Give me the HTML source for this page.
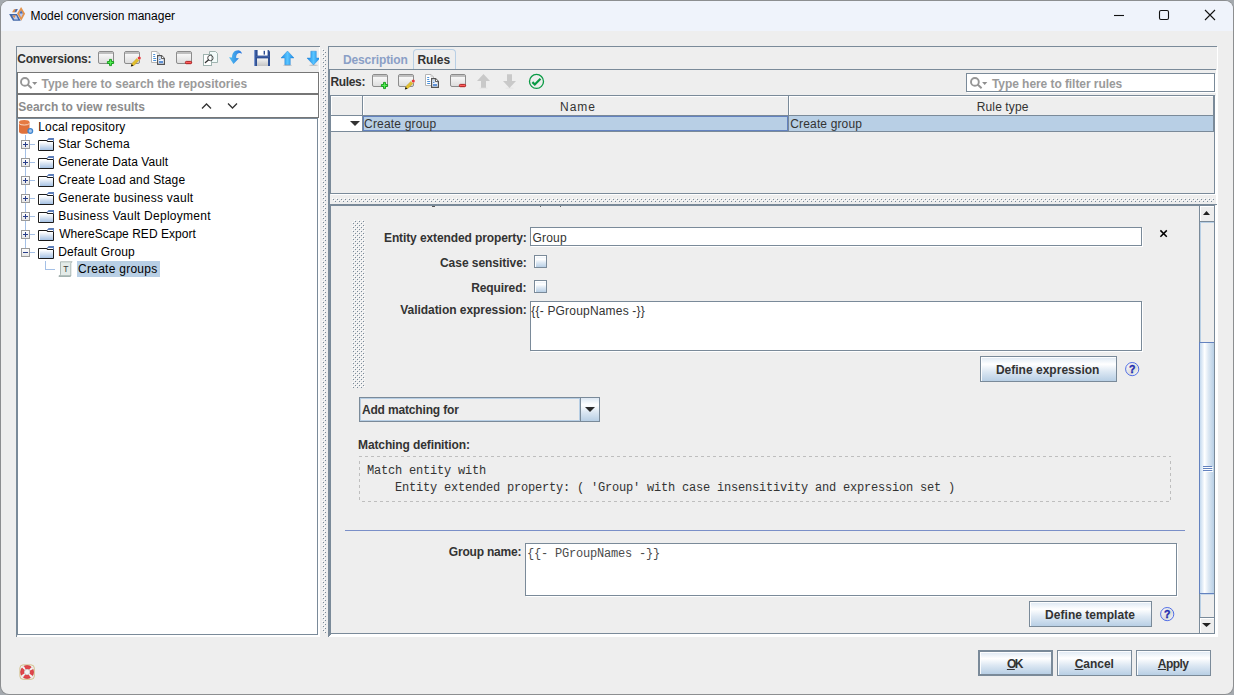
<!DOCTYPE html>
<html><head><meta charset="utf-8"><title>Model conversion manager</title>
<style>
*{box-sizing:border-box;margin:0;padding:0}
html,body{width:1234px;height:695px;overflow:hidden;background:#a4a9ae;}
body{font-family:"Liberation Sans",sans-serif;font-size:12px;color:#333;position:relative}
.a{position:absolute}
#win{position:absolute;left:1px;top:1px;width:1232px;height:693px;background:#eeeeee;border-radius:8px;overflow:hidden;box-shadow:0 0 0 1px rgba(120,120,120,0.55)}
#title{position:absolute;left:0;top:0;width:100%;height:30px;background:#eff3fb}
#title .t{position:absolute;left:31px;top:7px;font-size:12px;color:#000;white-space:nowrap;line-height:14px}
.l{position:absolute;white-space:nowrap;font-weight:bold;color:#333;line-height:14px;height:14px}
.p{position:absolute;white-space:nowrap;color:#333;line-height:14px;height:14px}
.btn{position:absolute;border:1px solid #7a8a99;box-shadow:inset 1px 1px 0 rgba(255,255,255,0.9);background:linear-gradient(#dde8f3 0%,#ffffff 30%,#dde8f3 60%,#b8cfe5 100%);text-align:center;font-weight:bold;color:#333;white-space:nowrap;line-height:14px}
.mono{font-family:"Liberation Mono",monospace;font-size:12px;letter-spacing:-0.2px;color:#333;white-space:pre;position:absolute;line-height:14px;height:14px}
svg{position:absolute;overflow:visible}
</style></head><body>
<div id="win"><div id="title"></div></div>
<div class="p" style="left:30.40px;top:9px;letter-spacing:-0.004px;color:#000">Model conversion manager</div>
<svg style="left:1100px;top:0" width="134" height="31" viewBox="1100 0 134 31"><g stroke="#111" stroke-width="1.1" fill="none"><path d="M1114 15.5H1124"/><rect x="1159.5" y="10.5" width="9" height="9" rx="1.5"/><path d="M1205 10L1215 20M1215 10L1205 20"/></g></svg>
<svg style="left:0;top:0" width="30" height="30" viewBox="0 0 30 30"><path d="M9.1 14H17L20.8 20.8H13Z" fill="#4468a8"/><path d="M12.2 15.6H16.2L18.2 19.4H14.2Z" fill="#c2d0f0"/><path d="M12.4 15.6H15.8L14.2 18.2Z" fill="#e08a45"/><path d="M21.1 7L25.1 13.8L21.2 20.8L17.1 13.5Z" fill="#e2924c"/><path d="M21.1 10.4L23 13.8L21.2 17.4L19.2 13.6Z" fill="#b9c8ef"/><path d="M21.1 10.4L22.8 13.6H19.4Z" fill="#4a6cae"/><path d="M15.4 9H17.9L16.2 12.2H13.6Z" fill="#4a6cae"/><path d="M14 9.2L15.6 9L14.4 12.2H12Z" fill="#e08a45"/></svg>
<div class="a" style="left:16px;top:46px;width:304px;height:1px;background:#7a8a99;"></div>
<div class="a" style="left:16px;top:46px;width:1px;height:591px;background:#7a8a99;"></div>
<div class="l" style="left:17.20px;top:52px;letter-spacing:-0.218px;">Conversions:</div>
<svg style="left:98px;top:51px" width="16" height="16" viewBox="0 0 16 16"><defs><linearGradient id="g1" x1="0" y1="0" x2="0" y2="1"><stop offset="0" stop-color="#fff"/><stop offset="1" stop-color="#dcdcdc"/></linearGradient></defs><rect x="0.5" y="0.5" width="15" height="12" rx="1.5" fill="url(#g1)" stroke="#8c8c8c"/><rect x="1" y="1" width="14" height="2" fill="#b4b4b4"/><rect x="1" y="1.6" width="14" height="0.8" fill="#d0d0d0"/><path d="M11.5 8.4H13.5V10.5H15.6V12.5H13.5V14.6H11.5V12.5H9.4V10.5H11.5Z" fill="#30d830" stroke="#169a1c" stroke-width="0.9" stroke-linejoin="round"/><path d="M12.5 9.2V13.8M10.2 11.5H14.8" stroke="#5cf05c" stroke-width="0.8" fill="none"/></svg>
<svg style="left:124px;top:51px" width="17" height="16" viewBox="0 0 17 16"><defs><linearGradient id="g2" x1="0" y1="0" x2="0" y2="1"><stop offset="0" stop-color="#fff"/><stop offset="1" stop-color="#dcdcdc"/></linearGradient></defs><rect x="0.5" y="0.5" width="15" height="12" rx="1.5" fill="url(#g2)" stroke="#8c8c8c"/><rect x="1" y="1" width="14" height="2" fill="#b4b4b4"/><rect x="1" y="1.6" width="14" height="0.8" fill="#d0d0d0"/><path d="M7.4 15L8 12.4L13.6 6.8L15.6 8.8L10 14.4Z" fill="#ecc932" stroke="#b08f1c" stroke-width="0.5"/><path d="M9 12.6L14 7.6M10 13.4L15 8.4" stroke="#c9a51e" stroke-width="0.5"/><path d="M13 7.4L13.8 6.6L15.8 8.6L15 9.4Z" fill="#e4e4e4"/><circle cx="15.3" cy="7" r="1.5" fill="#e8363a"/><path d="M6.8 15.4L7.7 13L9.4 14.7Z" fill="#111"/></svg>
<svg style="left:148px;top:51px" width="17" height="16" viewBox="0 0 17 16"><path d="M3.5 0.5H9L11.5 3V11.5H3.5Z" fill="#fff" stroke="#b4b4b4"/><path d="M9 0.5V3H11.5" fill="none" stroke="#c4c4c4" stroke-width="0.8"/><path d="M5.2 3.5H7.2M5.2 5.5H7.2M5.2 7.5H8.2M5.2 9.5H8.2" stroke="#4a90d9" stroke-width="1"/><path d="M9.6 4.6H13.6L16.4 7.4V13.4H9.6Z" fill="#f2f7ff" stroke="#555" stroke-width="1.2"/><path d="M13.4 4.8V7.6H16.2" fill="#fff" stroke="#555" stroke-width="1"/><rect x="11" y="10" width="4" height="2.2" fill="#5f92d6"/><rect x="11.2" y="7.8" width="1.2" height="1.2" fill="#3a78cc"/><rect x="11.4" y="6.2" width="0.8" height="1" fill="#7fb0e8"/></svg>
<svg style="left:176px;top:51px" width="16" height="16" viewBox="0 0 16 16"><defs><linearGradient id="g3" x1="0" y1="0" x2="0" y2="1"><stop offset="0" stop-color="#fff"/><stop offset="1" stop-color="#dcdcdc"/></linearGradient></defs><rect x="0.5" y="0.5" width="15" height="12" rx="1.5" fill="url(#g3)" stroke="#8c8c8c"/><rect x="1" y="1" width="14" height="2" fill="#b4b4b4"/><rect x="1" y="1.6" width="14" height="0.8" fill="#d0d0d0"/><rect x="9.4" y="10.4" width="6.2" height="2.3" rx="0.9" fill="#ff5e5e" stroke="#a81414" stroke-width="0.9"/></svg>
<svg style="left:203px;top:51px" width="16" height="16" viewBox="0 0 16 16"><path d="M6.5 0.5H12.5L14.5 2.5V11.5H6.5Z" fill="#f2fbfa" stroke="#9fb3af"/><rect x="0.5" y="3.5" width="8" height="11" fill="#fff" stroke="#9fb3af"/><circle cx="7.4" cy="7" r="2.7" fill="#ffffff" fill-opacity="0.35" stroke="#3a3a3a" stroke-width="0.9"/><path d="M5.4 9L2.4 11.5" stroke="#333" stroke-width="1.3" stroke-linecap="round"/></svg>
<svg style="left:229px;top:50px" width="14" height="15" viewBox="0 0 14 15"><defs><linearGradient id="g4" x1="0" y1="0" x2="1" y2="0"><stop offset="0" stop-color="#4fc0f2"/><stop offset="1" stop-color="#2a74de"/></linearGradient></defs><path d="M4.5 14L0 7.2L3 7.6C3 3 5.5 0.2 9.5 0.3C11.5 0.5 12.6 2 13 3.8C11.6 2.6 9.6 2.6 8.2 4C7.2 5.2 7 6.6 7.2 8L10 8.3Z" fill="url(#g4)"/></svg>
<svg style="left:254px;top:50px" width="16" height="16" viewBox="0 0 16 16"><defs><linearGradient id="g5" x1="0" y1="0" x2="0" y2="1"><stop offset="0" stop-color="#f4f4f4"/><stop offset="1" stop-color="#c4c4c4"/></linearGradient></defs><path d="M0 0H14.5L16 1.5V16H0Z" fill="#2e4f93"/><rect x="0" y="0" width="1.2" height="16" fill="#7d98cf"/><rect x="3.6" y="0" width="10" height="5.6" fill="#fff"/><rect x="9.6" y="0.8" width="1.4" height="3.8" fill="#2e4f93"/><rect x="3" y="8.4" width="11" height="7.6" fill="url(#g5)"/><rect x="2" y="6" width="13" height="1.2" fill="#4060a6"/></svg>
<svg style="left:281px;top:51px" width="13" height="15" viewBox="0 0 13 15"><defs><linearGradient id="g6" x1="0" y1="0" x2="1" y2="0"><stop offset="0" stop-color="#1688e6"/><stop offset="0.5" stop-color="#58c4ff"/><stop offset="1" stop-color="#1688e6"/></linearGradient></defs><ellipse cx="6.5" cy="14.2" rx="4.5" ry="0.7" fill="#000" fill-opacity="0.18"/><path d="M6.5 0L13 7H9.3V13.8H3.8V7H0Z" fill="url(#g6)" stroke="#1878d0" stroke-width="0.4"/></svg>
<svg style="left:307px;top:51px" width="13" height="15" viewBox="0 0 13 15"><defs><linearGradient id="g7" x1="0" y1="0" x2="1" y2="0"><stop offset="0" stop-color="#1688e6"/><stop offset="0.5" stop-color="#58c4ff"/><stop offset="1" stop-color="#1688e6"/></linearGradient></defs><ellipse cx="6.5" cy="14.2" rx="4.5" ry="0.7" fill="#000" fill-opacity="0.18"/><path d="M6.5 14L13 7H9.3V0.2H3.8V7H0Z" fill="url(#g7)" stroke="#1878d0" stroke-width="0.4"/></svg>
<div class="a" style="left:17px;top:636px;width:303px;height:1px;background:#fff;"></div>
<div class="a" style="left:319px;top:47px;width:1px;height:590px;background:#fff;"></div>
<div class="a" style="left:320px;top:47px;width:8px;height:20px;background:#eee;"></div>
<div class="a" style="left:17px;top:72px;width:302px;height:22px;background:#fff;"></div>
<div class="a" style="left:17px;top:72px;width:302px;height:1px;background:#767676;"></div>
<div class="a" style="left:17px;top:72px;width:1px;height:22px;background:#767676;"></div>
<div class="a" style="left:17px;top:93px;width:302px;height:1px;background:#767676;"></div>
<div class="a" style="left:318px;top:72px;width:1px;height:22px;background:#767676;"></div>
<svg style="left:20px;top:77px" width="18" height="12" viewBox="0 0 18 12"><circle cx="4.9" cy="4.9" r="3.9" fill="none" stroke="#969696" stroke-width="1.9"/><path d="M7.6 7.6L11.6 11.2" stroke="#949494" stroke-width="2"/><path d="M12.1 4.9H17.3L14.7 8.1Z" fill="#8e8e8e"/></svg>
<div class="l" style="left:41.50px;top:77px;letter-spacing:-0.006px;color:#9a9a9a">Type here to search the repositories</div>
<div class="a" style="left:17px;top:94px;width:302px;height:24px;background:#fff;"></div>
<div class="a" style="left:17px;top:94px;width:302px;height:1px;background:#767676;"></div>
<div class="a" style="left:17px;top:94px;width:1px;height:24px;background:#767676;"></div>
<div class="a" style="left:17px;top:117px;width:302px;height:1px;background:#767676;"></div>
<div class="a" style="left:318px;top:94px;width:1px;height:24px;background:#767676;"></div>
<div class="l" style="left:18.20px;top:100px;letter-spacing:0.005px;color:#8c8c8c">Search to view results</div>
<svg style="left:201px;top:102px" width="40" height="8" viewBox="0 0 40 8"><path d="M1 6.5L5.5 2L10 6.5M27 1.5L31.5 6L36 1.5" fill="none" stroke="#333" stroke-width="1.3"/></svg>
<div class="a" style="left:18px;top:118px;width:300px;height:517px;background:#fff;"></div>
<div class="a" style="left:17px;top:118px;width:1px;height:517px;background:#7a8a99;"></div>
<div class="a" style="left:17px;top:118px;width:301px;height:1px;background:#7a8a99;"></div>
<div class="a" style="left:17px;top:634px;width:301px;height:1px;background:#7a8a99;"></div>
<div class="a" style="left:317px;top:118px;width:1px;height:517px;background:#7a8a99;"></div>
<div class="a" style="left:18px;top:635px;width:301px;height:1px;background:#fff;"></div>
<div class="a" style="left:318px;top:118px;width:1px;height:518px;background:#fff;"></div>
<div class="a" style="left:25px;top:135px;width:1px;height:118px;background:#a4c0e6;"></div>
<svg style="left:19px;top:120px" width="15" height="15" viewBox="0 0 15 15"><path d="M0 2.5V11.5A5.25 2.3 0 0 0 10.5 11.5V2.5Z" fill="#e0713a"/><ellipse cx="5.25" cy="2.4" rx="5.25" ry="2.3" fill="#e57a42"/><path d="M0.2 3.6A5.25 2 0 0 0 10.3 3.6" fill="none" stroke="#fde8d8" stroke-width="0.9"/><circle cx="11.3" cy="11" r="2.3" fill="#a9c8ee" stroke="#3f86cf" stroke-width="1.3"/></svg>
<div class="p" style="left:38.30px;top:120px;letter-spacing:0.153px;color:#000">Local repository</div>
<div class="a" style="left:30px;top:144px;width:5px;height:1px;background:#a4c0e6;"></div>
<svg style="left:21px;top:140px" width="9" height="9" viewBox="0 0 9 9"><defs><linearGradient id="g8" x1="0" y1="0" x2="0" y2="1"><stop offset="0" stop-color="#fff"/><stop offset="1" stop-color="#e4e4e4"/></linearGradient></defs><rect x="0.5" y="0.5" width="8" height="8" fill="url(#g8)" stroke="#9a9a9a"/><path d="M2 4.5H7" stroke="#2a3f8a" stroke-width="1"/><path d="M4.5 2V7" stroke="#2a3f8a" stroke-width="1"/></svg>
<svg style="left:38px;top:138px" width="16" height="13" viewBox="0 0 16 13"><defs><linearGradient id="g9" x1="0" y1="0" x2="0" y2="1"><stop offset="0" stop-color="#fff"/><stop offset="1" stop-color="#a6c2e4"/></linearGradient></defs><path d="M9 2L10.6 0H16V2Z" fill="#5b7dba"/><path d="M0.5 2.5H9L10.5 1.5H15.5V12.5H0.5Z" fill="#fff"/><rect x="2" y="4" width="13" height="8" fill="url(#g9)"/><path d="M0.5 2.5H9.2V3.5H15.5V12.5H0.5Z" fill="none" stroke="#1c1c1c" stroke-width="1"/><path d="M9.2 2.6L10 1.5H15.5V3.5" fill="none" stroke="#5b7dba" stroke-width="1"/></svg>
<div class="p" style="left:58.20px;top:137px;letter-spacing:0.210px;color:#000">Star Schema</div>
<div class="a" style="left:30px;top:162px;width:5px;height:1px;background:#a4c0e6;"></div>
<svg style="left:21px;top:158px" width="9" height="9" viewBox="0 0 9 9"><defs><linearGradient id="g10" x1="0" y1="0" x2="0" y2="1"><stop offset="0" stop-color="#fff"/><stop offset="1" stop-color="#e4e4e4"/></linearGradient></defs><rect x="0.5" y="0.5" width="8" height="8" fill="url(#g10)" stroke="#9a9a9a"/><path d="M2 4.5H7" stroke="#2a3f8a" stroke-width="1"/><path d="M4.5 2V7" stroke="#2a3f8a" stroke-width="1"/></svg>
<svg style="left:38px;top:156px" width="16" height="13" viewBox="0 0 16 13"><defs><linearGradient id="g11" x1="0" y1="0" x2="0" y2="1"><stop offset="0" stop-color="#fff"/><stop offset="1" stop-color="#a6c2e4"/></linearGradient></defs><path d="M9 2L10.6 0H16V2Z" fill="#5b7dba"/><path d="M0.5 2.5H9L10.5 1.5H15.5V12.5H0.5Z" fill="#fff"/><rect x="2" y="4" width="13" height="8" fill="url(#g11)"/><path d="M0.5 2.5H9.2V3.5H15.5V12.5H0.5Z" fill="none" stroke="#1c1c1c" stroke-width="1"/><path d="M9.2 2.6L10 1.5H15.5V3.5" fill="none" stroke="#5b7dba" stroke-width="1"/></svg>
<div class="p" style="left:58.20px;top:155px;letter-spacing:0.078px;color:#000">Generate Data Vault</div>
<div class="a" style="left:30px;top:180px;width:5px;height:1px;background:#a4c0e6;"></div>
<svg style="left:21px;top:176px" width="9" height="9" viewBox="0 0 9 9"><defs><linearGradient id="g12" x1="0" y1="0" x2="0" y2="1"><stop offset="0" stop-color="#fff"/><stop offset="1" stop-color="#e4e4e4"/></linearGradient></defs><rect x="0.5" y="0.5" width="8" height="8" fill="url(#g12)" stroke="#9a9a9a"/><path d="M2 4.5H7" stroke="#2a3f8a" stroke-width="1"/><path d="M4.5 2V7" stroke="#2a3f8a" stroke-width="1"/></svg>
<svg style="left:38px;top:174px" width="16" height="13" viewBox="0 0 16 13"><defs><linearGradient id="g13" x1="0" y1="0" x2="0" y2="1"><stop offset="0" stop-color="#fff"/><stop offset="1" stop-color="#a6c2e4"/></linearGradient></defs><path d="M9 2L10.6 0H16V2Z" fill="#5b7dba"/><path d="M0.5 2.5H9L10.5 1.5H15.5V12.5H0.5Z" fill="#fff"/><rect x="2" y="4" width="13" height="8" fill="url(#g13)"/><path d="M0.5 2.5H9.2V3.5H15.5V12.5H0.5Z" fill="none" stroke="#1c1c1c" stroke-width="1"/><path d="M9.2 2.6L10 1.5H15.5V3.5" fill="none" stroke="#5b7dba" stroke-width="1"/></svg>
<div class="p" style="left:58.20px;top:173px;letter-spacing:0.140px;color:#000">Create Load and Stage</div>
<div class="a" style="left:30px;top:198px;width:5px;height:1px;background:#a4c0e6;"></div>
<svg style="left:21px;top:194px" width="9" height="9" viewBox="0 0 9 9"><defs><linearGradient id="g14" x1="0" y1="0" x2="0" y2="1"><stop offset="0" stop-color="#fff"/><stop offset="1" stop-color="#e4e4e4"/></linearGradient></defs><rect x="0.5" y="0.5" width="8" height="8" fill="url(#g14)" stroke="#9a9a9a"/><path d="M2 4.5H7" stroke="#2a3f8a" stroke-width="1"/><path d="M4.5 2V7" stroke="#2a3f8a" stroke-width="1"/></svg>
<svg style="left:38px;top:192px" width="16" height="13" viewBox="0 0 16 13"><defs><linearGradient id="g15" x1="0" y1="0" x2="0" y2="1"><stop offset="0" stop-color="#fff"/><stop offset="1" stop-color="#a6c2e4"/></linearGradient></defs><path d="M9 2L10.6 0H16V2Z" fill="#5b7dba"/><path d="M0.5 2.5H9L10.5 1.5H15.5V12.5H0.5Z" fill="#fff"/><rect x="2" y="4" width="13" height="8" fill="url(#g15)"/><path d="M0.5 2.5H9.2V3.5H15.5V12.5H0.5Z" fill="none" stroke="#1c1c1c" stroke-width="1"/><path d="M9.2 2.6L10 1.5H15.5V3.5" fill="none" stroke="#5b7dba" stroke-width="1"/></svg>
<div class="p" style="left:58.20px;top:191px;letter-spacing:0.255px;color:#000">Generate business vault</div>
<div class="a" style="left:30px;top:216px;width:5px;height:1px;background:#a4c0e6;"></div>
<svg style="left:21px;top:212px" width="9" height="9" viewBox="0 0 9 9"><defs><linearGradient id="g16" x1="0" y1="0" x2="0" y2="1"><stop offset="0" stop-color="#fff"/><stop offset="1" stop-color="#e4e4e4"/></linearGradient></defs><rect x="0.5" y="0.5" width="8" height="8" fill="url(#g16)" stroke="#9a9a9a"/><path d="M2 4.5H7" stroke="#2a3f8a" stroke-width="1"/><path d="M4.5 2V7" stroke="#2a3f8a" stroke-width="1"/></svg>
<svg style="left:38px;top:210px" width="16" height="13" viewBox="0 0 16 13"><defs><linearGradient id="g17" x1="0" y1="0" x2="0" y2="1"><stop offset="0" stop-color="#fff"/><stop offset="1" stop-color="#a6c2e4"/></linearGradient></defs><path d="M9 2L10.6 0H16V2Z" fill="#5b7dba"/><path d="M0.5 2.5H9L10.5 1.5H15.5V12.5H0.5Z" fill="#fff"/><rect x="2" y="4" width="13" height="8" fill="url(#g17)"/><path d="M0.5 2.5H9.2V3.5H15.5V12.5H0.5Z" fill="none" stroke="#1c1c1c" stroke-width="1"/><path d="M9.2 2.6L10 1.5H15.5V3.5" fill="none" stroke="#5b7dba" stroke-width="1"/></svg>
<div class="p" style="left:58.20px;top:209px;letter-spacing:0.271px;color:#000">Business Vault Deployment</div>
<div class="a" style="left:30px;top:234px;width:5px;height:1px;background:#a4c0e6;"></div>
<svg style="left:21px;top:230px" width="9" height="9" viewBox="0 0 9 9"><defs><linearGradient id="g18" x1="0" y1="0" x2="0" y2="1"><stop offset="0" stop-color="#fff"/><stop offset="1" stop-color="#e4e4e4"/></linearGradient></defs><rect x="0.5" y="0.5" width="8" height="8" fill="url(#g18)" stroke="#9a9a9a"/><path d="M2 4.5H7" stroke="#2a3f8a" stroke-width="1"/><path d="M4.5 2V7" stroke="#2a3f8a" stroke-width="1"/></svg>
<svg style="left:38px;top:228px" width="16" height="13" viewBox="0 0 16 13"><defs><linearGradient id="g19" x1="0" y1="0" x2="0" y2="1"><stop offset="0" stop-color="#fff"/><stop offset="1" stop-color="#a6c2e4"/></linearGradient></defs><path d="M9 2L10.6 0H16V2Z" fill="#5b7dba"/><path d="M0.5 2.5H9L10.5 1.5H15.5V12.5H0.5Z" fill="#fff"/><rect x="2" y="4" width="13" height="8" fill="url(#g19)"/><path d="M0.5 2.5H9.2V3.5H15.5V12.5H0.5Z" fill="none" stroke="#1c1c1c" stroke-width="1"/><path d="M9.2 2.6L10 1.5H15.5V3.5" fill="none" stroke="#5b7dba" stroke-width="1"/></svg>
<div class="p" style="left:59.20px;top:227px;letter-spacing:0.025px;color:#000">WhereScape RED Export</div>
<div class="a" style="left:30px;top:252px;width:5px;height:1px;background:#a4c0e6;"></div>
<svg style="left:21px;top:248px" width="9" height="9" viewBox="0 0 9 9"><defs><linearGradient id="g20" x1="0" y1="0" x2="0" y2="1"><stop offset="0" stop-color="#fff"/><stop offset="1" stop-color="#e4e4e4"/></linearGradient></defs><rect x="0.5" y="0.5" width="8" height="8" fill="url(#g20)" stroke="#9a9a9a"/><path d="M2 4.5H7" stroke="#2a3f8a" stroke-width="1"/></svg>
<svg style="left:38px;top:246px" width="16" height="13" viewBox="0 0 16 13"><defs><linearGradient id="g21" x1="0" y1="0" x2="0" y2="1"><stop offset="0" stop-color="#fff"/><stop offset="1" stop-color="#a6c2e4"/></linearGradient></defs><path d="M9 2L10.6 0H16V2Z" fill="#5b7dba"/><path d="M0.5 2.5H9L10.5 1.5H15.5V12.5H0.5Z" fill="#fff"/><rect x="2" y="4" width="13" height="8" fill="url(#g21)"/><path d="M0.5 2.5H9.2V3.5H15.5V12.5H0.5Z" fill="none" stroke="#1c1c1c" stroke-width="1"/><path d="M9.2 2.6L10 1.5H15.5V3.5" fill="none" stroke="#5b7dba" stroke-width="1"/></svg>
<div class="p" style="left:58.20px;top:245px;letter-spacing:0.158px;color:#000">Default Group</div>
<div class="a" style="left:45px;top:261px;width:1px;height:9px;background:#a4c0e6;"></div>
<div class="a" style="left:45px;top:269px;width:10px;height:1px;background:#a4c0e6;"></div>
<svg style="left:58px;top:261px" width="16" height="16" viewBox="0 0 16 16"><path d="M2.5 0.8H14.2C13 1.2 12.8 2 12.8 3V15H1.2C2.2 14.6 2.5 13.8 2.5 13Z" fill="#e3ebe8" stroke="#9aaaa6" stroke-width="0.8"/><path d="M0.6 15.2H12.6" stroke="#7a8f8a" stroke-width="0.8"/><text x="7.75" y="11.4" text-anchor="middle" font-family="Liberation Sans, sans-serif" font-size="8.6" fill="#3c3c3c">T</text></svg>
<div class="a" style="left:77px;top:261px;width:83px;height:16px;background:#b8cfe5;"></div>
<div class="p" style="left:78.00px;top:262px;letter-spacing:0.267px;color:#000">Create groups</div>
<svg style="left:322px;top:49px" width="4" height="584" viewBox="322 49 4 584" shape-rendering="crispEdges"><defs><pattern id="bv" x="322" y="49" width="4" height="4" patternUnits="userSpaceOnUse"><rect x="0" y="0" width="1" height="1" fill="#fff"/><rect x="2" y="2" width="1" height="1" fill="#fff"/><rect x="1" y="1" width="1" height="1" fill="#7a8a99"/><rect x="3" y="3" width="1" height="1" fill="#7a8a99"/></pattern></defs><rect x="322" y="49" width="4" height="584" fill="url(#bv)"/></svg>
<div class="a" style="left:328px;top:46px;width:889px;height:1px;background:#7a8a99;"></div>
<div class="a" style="left:328px;top:46px;width:1px;height:591px;background:#7a8a99;"></div>
<div class="a" style="left:329px;top:636px;width:889px;height:1px;background:#fff;"></div>
<div class="a" style="left:1217px;top:47px;width:1px;height:590px;background:#fff;"></div>
<div class="a" style="left:329px;top:69px;width:887px;height:1px;background:#7a8a99;"></div>
<div class="a" style="left:329px;top:69px;width:1px;height:567px;background:#7a8a99;"></div>
<div class="a" style="left:330px;top:635px;width:887px;height:1px;background:#fff;"></div>
<div class="a" style="left:1216px;top:70px;width:1px;height:566px;background:#fff;"></div>
<div class="l" style="left:342.90px;top:53px;letter-spacing:-0.110px;color:#8a9fc6">Description</div>
<div class="a" style="left:413px;top:49px;width:43px;height:20px;border:1px solid #b8cfe5;border-bottom:none;border-radius:4px 4px 0 0;background:#eee"></div>
<div class="l" style="left:417.40px;top:53px;letter-spacing:0.000px;">Rules</div>
<div class="l" style="left:330.50px;top:75px;letter-spacing:-0.360px;">Rules:</div>
<svg style="left:372px;top:74px" width="16" height="16" viewBox="0 0 16 16"><defs><linearGradient id="g22" x1="0" y1="0" x2="0" y2="1"><stop offset="0" stop-color="#fff"/><stop offset="1" stop-color="#dcdcdc"/></linearGradient></defs><rect x="0.5" y="0.5" width="15" height="12" rx="1.5" fill="url(#g22)" stroke="#8c8c8c"/><rect x="1" y="1" width="14" height="2" fill="#b4b4b4"/><rect x="1" y="1.6" width="14" height="0.8" fill="#d0d0d0"/><path d="M11.5 8.4H13.5V10.5H15.6V12.5H13.5V14.6H11.5V12.5H9.4V10.5H11.5Z" fill="#30d830" stroke="#169a1c" stroke-width="0.9" stroke-linejoin="round"/><path d="M12.5 9.2V13.8M10.2 11.5H14.8" stroke="#5cf05c" stroke-width="0.8" fill="none"/></svg>
<svg style="left:398px;top:74px" width="17" height="16" viewBox="0 0 17 16"><defs><linearGradient id="g23" x1="0" y1="0" x2="0" y2="1"><stop offset="0" stop-color="#fff"/><stop offset="1" stop-color="#dcdcdc"/></linearGradient></defs><rect x="0.5" y="0.5" width="15" height="12" rx="1.5" fill="url(#g23)" stroke="#8c8c8c"/><rect x="1" y="1" width="14" height="2" fill="#b4b4b4"/><rect x="1" y="1.6" width="14" height="0.8" fill="#d0d0d0"/><path d="M7.4 15L8 12.4L13.6 6.8L15.6 8.8L10 14.4Z" fill="#ecc932" stroke="#b08f1c" stroke-width="0.5"/><path d="M9 12.6L14 7.6M10 13.4L15 8.4" stroke="#c9a51e" stroke-width="0.5"/><path d="M13 7.4L13.8 6.6L15.8 8.6L15 9.4Z" fill="#e4e4e4"/><circle cx="15.3" cy="7" r="1.5" fill="#e8363a"/><path d="M6.8 15.4L7.7 13L9.4 14.7Z" fill="#111"/></svg>
<svg style="left:422px;top:74px" width="17" height="16" viewBox="0 0 17 16"><path d="M3.5 0.5H9L11.5 3V11.5H3.5Z" fill="#fff" stroke="#b4b4b4"/><path d="M9 0.5V3H11.5" fill="none" stroke="#c4c4c4" stroke-width="0.8"/><path d="M5.2 3.5H7.2M5.2 5.5H7.2M5.2 7.5H8.2M5.2 9.5H8.2" stroke="#4a90d9" stroke-width="1"/><path d="M9.6 4.6H13.6L16.4 7.4V13.4H9.6Z" fill="#f2f7ff" stroke="#555" stroke-width="1.2"/><path d="M13.4 4.8V7.6H16.2" fill="#fff" stroke="#555" stroke-width="1"/><rect x="11" y="10" width="4" height="2.2" fill="#5f92d6"/><rect x="11.2" y="7.8" width="1.2" height="1.2" fill="#3a78cc"/><rect x="11.4" y="6.2" width="0.8" height="1" fill="#7fb0e8"/></svg>
<svg style="left:450px;top:74px" width="16" height="16" viewBox="0 0 16 16"><defs><linearGradient id="g24" x1="0" y1="0" x2="0" y2="1"><stop offset="0" stop-color="#fff"/><stop offset="1" stop-color="#dcdcdc"/></linearGradient></defs><rect x="0.5" y="0.5" width="15" height="12" rx="1.5" fill="url(#g24)" stroke="#8c8c8c"/><rect x="1" y="1" width="14" height="2" fill="#b4b4b4"/><rect x="1" y="1.6" width="14" height="0.8" fill="#d0d0d0"/><rect x="9.4" y="10.4" width="6.2" height="2.3" rx="0.9" fill="#ff5e5e" stroke="#a81414" stroke-width="0.9"/></svg>
<svg style="left:477px;top:74px" width="13" height="15" viewBox="0 0 13 15"><ellipse cx="6.5" cy="14" rx="4.5" ry="0.6" fill="#000" fill-opacity="0.05"/><path d="M6.5 0L13 7H9V13.8H4V7H0Z" fill="#c9c9c9"/></svg>
<svg style="left:503px;top:74px" width="13" height="15" viewBox="0 0 13 15"><ellipse cx="6.5" cy="14" rx="4.5" ry="0.6" fill="#000" fill-opacity="0.05"/><path d="M6.5 14L13 7H9V0.2H4V7H0Z" fill="#c9c9c9"/></svg>
<svg style="left:528px;top:73px" width="17" height="17" viewBox="0 0 17 17"><circle cx="8.5" cy="8.4" r="7" fill="none" stroke="#0a9a44" stroke-width="1.3"/><path d="M4.4 9.1L6.8 11.5L12.5 5.8" fill="none" stroke="#0a9a44" stroke-width="2.2"/></svg>
<div class="a" style="left:966px;top:73px;width:249px;height:19px;background:#fff;border:1px solid #7a8a99"></div>
<div class="a" style="left:967px;top:92px;width:249px;height:1px;background:#fff;"></div>
<div class="a" style="left:1215px;top:74px;width:1px;height:19px;background:#fff;"></div>
<svg style="left:970px;top:77px" width="18" height="12" viewBox="0 0 18 12"><circle cx="4.9" cy="4.9" r="3.9" fill="none" stroke="#969696" stroke-width="1.9"/><path d="M7.6 7.6L11.6 11.2" stroke="#949494" stroke-width="2"/><path d="M12.1 4.9H17.3L14.7 8.1Z" fill="#8e8e8e"/></svg>
<div class="l" style="left:992.00px;top:77px;letter-spacing:-0.067px;color:#9a9a9a">Type here to filter rules</div>
<div class="a" style="left:330px;top:95px;width:885px;height:1px;background:#7a8a99;"></div>
<div class="a" style="left:330px;top:95px;width:1px;height:99px;background:#7a8a99;"></div>
<div class="a" style="left:330px;top:193px;width:885px;height:1px;background:#7a8a99;"></div>
<div class="a" style="left:1214px;top:95px;width:1px;height:99px;background:#7a8a99;"></div>
<div class="a" style="left:331px;top:194px;width:885px;height:1px;background:#fff;"></div>
<div class="a" style="left:1215px;top:96px;width:1px;height:99px;background:#fff;"></div>
<div class="a" style="left:331px;top:96px;width:883px;height:1px;background:#fff;"></div>
<div class="a" style="left:331px;top:96px;width:1px;height:19px;background:#fff;"></div>
<div class="a" style="left:363px;top:96px;width:1px;height:19px;background:#fff;"></div>
<div class="a" style="left:789px;top:96px;width:1px;height:19px;background:#fff;"></div>
<div class="a" style="left:331px;top:115px;width:883px;height:1px;background:#7a8a99;"></div>
<div class="a" style="left:362px;top:96px;width:1px;height:20px;background:#7a8a99;"></div>
<div class="a" style="left:788px;top:96px;width:1px;height:36px;background:#7a8a99;"></div>
<div class="a" style="left:1213px;top:96px;width:1px;height:36px;background:#7a8a99;"></div>
<div class="p" style="left:560.10px;top:100px;letter-spacing:0.933px;">Name</div>
<div class="p" style="left:976.80px;top:100px;letter-spacing:0.112px;">Rule type</div>
<div class="a" style="left:331px;top:116px;width:31px;height:15px;background:#fff;"></div>
<div class="a" style="left:363px;top:116px;width:425px;height:15px;background:#b8cfe5;border:1px solid #6382bf"></div>
<div class="a" style="left:789px;top:116px;width:424px;height:15px;background:#b8cfe5;"></div>
<div class="a" style="left:331px;top:131px;width:883px;height:1px;background:#7a8a99;"></div>
<div class="a" style="left:362px;top:116px;width:1px;height:16px;background:#7a8a99;"></div>
<svg style="left:350px;top:121px" width="10" height="5" viewBox="0 0 10 5"><path d="M0 0H10L5 5Z" fill="#333"/></svg>
<div class="p" style="left:364.10px;top:117px;letter-spacing:0.182px;">Create group</div>
<div class="p" style="left:790.30px;top:117px;letter-spacing:0.145px;">Create group</div>
<svg style="left:332px;top:198px" width="882" height="4" viewBox="332 198 882 4" shape-rendering="crispEdges"><defs><pattern id="bh" x="340" y="198" width="4" height="4" patternUnits="userSpaceOnUse"><rect x="0" y="0" width="1" height="1" fill="#fff"/><rect x="2" y="2" width="1" height="1" fill="#fff"/><rect x="1" y="1" width="1" height="1" fill="#7a8a99"/><rect x="3" y="3" width="1" height="1" fill="#7a8a99"/></pattern></defs><rect x="332" y="198" width="882" height="4" fill="url(#bh)"/></svg>
<div class="a" style="left:330px;top:204px;width:887px;height:1px;background:#7a8a99;"></div>
<div class="a" style="left:330px;top:205px;width:885px;height:1px;background:#7a8a99;"></div>
<div class="a" style="left:432px;top:206px;width:3px;height:1px;background:#555;"></div>
<div class="a" style="left:540px;top:206px;width:1px;height:1px;background:#666;"></div>
<div class="a" style="left:560px;top:206px;width:1px;height:1px;background:#666;"></div>
<div class="a" style="left:330px;top:204px;width:1px;height:431px;background:#7a8a99;"></div>
<div class="a" style="left:331px;top:633px;width:884px;height:1px;background:#7a8a99;"></div>
<div class="a" style="left:331px;top:634px;width:885px;height:1px;background:#fff;"></div>
<div class="a" style="left:1215px;top:206px;width:1px;height:429px;background:#fff;"></div>
<div class="a" style="left:1199px;top:206px;width:1px;height:427px;background:#7a8a99;"></div>
<div class="a" style="left:1214px;top:206px;width:1px;height:427px;background:#7a8a99;"></div>
<div class="a" style="left:1200px;top:206px;width:14px;height:15px;background:#eee;"></div>
<div class="a" style="left:1200px;top:206px;width:14px;height:1px;background:#fff;"></div>
<div class="a" style="left:1200px;top:206px;width:1px;height:15px;background:#fff;"></div>
<div class="a" style="left:1199px;top:221px;width:16px;height:1px;background:#7a8a99;"></div>
<svg style="left:1203px;top:211px" width="7" height="4" viewBox="0 0 7 4"><path d="M0 4L3.5 0L7 4Z" fill="#222"/></svg>
<div class="a" style="left:1200px;top:222px;width:14px;height:1px;background:#b8cfe5;"></div>
<div class="a" style="left:1200px;top:222px;width:1px;height:120px;background:#b8cfe5;"></div>
<div class="a" style="left:1200px;top:594px;width:1px;height:23px;background:#b8cfe5;"></div>
<div class="a" style="left:1200px;top:594px;width:14px;height:1px;background:#c8d8e8;"></div>
<div class="a" style="left:1199px;top:342px;width:15px;height:252px;border:1px solid #6382bf;border-right:none;background:linear-gradient(90deg,#c4d9ef 0%,#ffffff 33%,#dde8f3 60%,#b8cfe5 100%)"></div>
<div class="a" style="left:1214px;top:342px;width:1px;height:252px;background:#7a8a99;"></div>
<svg style="left:1203px;top:466px" width="10" height="6" viewBox="0 0 10 6" shape-rendering="crispEdges"><path d="M1 1.5H10M1 3.5H10M1 5.5H10" stroke="#fff" stroke-width="1"/><path d="M0 0.5H9M0 2.5H9M0 4.5H9" stroke="#6382bf" stroke-width="1"/></svg>
<div class="a" style="left:1199px;top:617px;width:16px;height:1px;background:#7a8a99;"></div>
<div class="a" style="left:1200px;top:618px;width:14px;height:15px;background:#eee;"></div>
<div class="a" style="left:1200px;top:618px;width:14px;height:1px;background:#fff;"></div>
<div class="a" style="left:1200px;top:618px;width:1px;height:15px;background:#fff;"></div>
<svg style="left:1202px;top:623px" width="9" height="4" viewBox="0 0 9 4"><path d="M0 0H9L4.5 4Z" fill="#222"/></svg>
<div class="a" style="left:1199px;top:633px;width:16px;height:1px;background:#7a8a99;"></div>
<svg style="left:352px;top:220px" width="13" height="168" viewBox="352 220 13 168" shape-rendering="crispEdges"><defs><pattern id="bd" x="352" y="220" width="4" height="4" patternUnits="userSpaceOnUse"><rect x="2" y="0" width="1" height="1" fill="#fff"/><rect x="0" y="2" width="1" height="1" fill="#fff"/><rect x="3" y="1" width="1" height="1" fill="#7a8a99"/><rect x="1" y="3" width="1" height="1" fill="#7a8a99"/></pattern></defs><rect x="352" y="220" width="13" height="168" fill="url(#bd)"/></svg>
<div class="l" style="left:384.00px;top:231px;letter-spacing:-0.108px;">Entity extended property:</div>
<div class="a" style="left:530px;top:227px;width:612px;height:19px;background:#fff;border:1px solid #7a8a99"></div>
<div class="a" style="left:531px;top:246px;width:612px;height:1px;background:#fff;"></div>
<div class="a" style="left:1142px;top:228px;width:1px;height:19px;background:#fff;"></div>
<div class="p" style="left:532.40px;top:231px;letter-spacing:0.225px;">Group</div>
<div class="l" style="left:440.00px;top:256px;letter-spacing:-0.043px;">Case sensitive:</div>
<div class="l" style="left:471.20px;top:281px;letter-spacing:-0.100px;">Required:</div>
<div class="l" style="left:400.20px;top:303px;letter-spacing:-0.038px;">Validation expression:</div>
<div class="a" style="left:530px;top:301px;width:612px;height:50px;background:#fff;border:1px solid #7a8a99"></div>
<div class="a" style="left:531px;top:351px;width:612px;height:1px;background:#fff;"></div>
<div class="a" style="left:1142px;top:302px;width:1px;height:50px;background:#fff;"></div>
<div class="p" style="left:531.30px;top:304px;letter-spacing:0.189px;">{{- PGroupNames -}}</div>
<div class="a" style="left:534px;top:255px;width:13px;height:13px;border:1px solid #7a8a99;box-shadow:inset 1px 1px 0 #fff;background:linear-gradient(#e6eef7 0%,#ffffff 30%,#dde8f3 60%,#b8cfe5 100%)"></div>
<div class="a" style="left:534px;top:280px;width:13px;height:13px;border:1px solid #7a8a99;box-shadow:inset 1px 1px 0 #fff;background:linear-gradient(#e6eef7 0%,#ffffff 30%,#dde8f3 60%,#b8cfe5 100%)"></div>
<svg style="left:1160px;top:230px" width="7" height="7" viewBox="0 0 7 7"><path d="M0.4 0.4L6.8 6.8M6.8 0.4L0.4 6.8" stroke="#000" stroke-width="1.5" fill="none"/></svg>
<div class="btn" style="left:980px;top:356px;width:137px;height:26px"></div>
<div class="l" style="left:995.90px;top:363px;letter-spacing:0.012px;">Define expression</div>
<svg style="left:1125px;top:362px" width="15" height="15" viewBox="0 0 15 15"><defs><linearGradient id="g27" x1="0" y1="0" x2="1" y2="1"><stop offset="0" stop-color="#fff"/><stop offset="0.6" stop-color="#dcdcdc"/><stop offset="1" stop-color="#fff"/></linearGradient></defs><circle cx="7.2" cy="7.1" r="6.6" fill="url(#g27)" stroke="#4060e4" stroke-width="0.9"/><text x="7.3" y="10.9" text-anchor="middle" font-family="Liberation Sans, sans-serif" font-weight="bold" font-size="10.5" fill="#1c2cb0" stroke="#1c2cb0" stroke-width="0.35">?</text></svg>
<div class="a" style="left:359px;top:397px;width:241px;height:25px;border:1px solid #7a8a99;background:#eee"></div>
<div class="a" style="left:360px;top:398px;width:220px;height:23px;border:1px solid #b8cfe5"></div>
<div class="a" style="left:581px;top:398px;width:18px;height:23px;background:linear-gradient(#dde8f3 0%,#ffffff 30%,#dde8f3 60%,#b8cfe5 100%)"></div>
<div class="a" style="left:580px;top:398px;width:1px;height:23px;background:#7a8a99;"></div>
<svg style="left:585px;top:407px" width="10" height="5" viewBox="0 0 10 5"><path d="M0 0H10L5 5Z" fill="#2a2a2a"/></svg>
<div class="l" style="left:361.90px;top:403px;letter-spacing:-0.160px;">Add matching for</div>
<div class="l" style="left:358.00px;top:438px;letter-spacing:-0.111px;">Matching definition:</div>
<svg style="left:359px;top:456px" width="812" height="46" viewBox="359 456 812 46" shape-rendering="crispEdges"><g stroke="#bebebe" stroke-width="1" stroke-dasharray="3 3" fill="none"><path d="M359 456.5H1171"/><path d="M362 501.5H1171"/><path d="M1170.5 461V501"/><path d="M359.5 461V501"/></g></svg>
<div class="mono" style="left:367px;top:464px;">Match entity with</div>
<div class="mono" style="left:367px;top:481px;">    Entity extended property: ( 'Group' with case insensitivity and expression set )</div>
<div class="a" style="left:345px;top:530px;width:840px;height:1px;background:#7a8fc8;"></div>
<div class="l" style="left:448.80px;top:545px;letter-spacing:-0.200px;">Group name:</div>
<div class="a" style="left:525px;top:543px;width:652px;height:53px;background:#fff;border:1px solid #7a8a99"></div>
<div class="a" style="left:526px;top:596px;width:652px;height:1px;background:#fff;"></div>
<div class="a" style="left:1177px;top:544px;width:1px;height:53px;background:#fff;"></div>
<div class="mono" style="left:527px;top:547px;color:#4c4c4c">{{- PGroupNames -}}</div>
<div class="btn" style="left:1029px;top:601px;width:123px;height:26px"></div>
<div class="l" style="left:1045.10px;top:608px;letter-spacing:0.029px;">Define template</div>
<svg style="left:1160px;top:607px" width="15" height="15" viewBox="0 0 15 15"><defs><linearGradient id="g28" x1="0" y1="0" x2="1" y2="1"><stop offset="0" stop-color="#fff"/><stop offset="0.6" stop-color="#dcdcdc"/><stop offset="1" stop-color="#fff"/></linearGradient></defs><circle cx="7.2" cy="7.1" r="6.6" fill="url(#g28)" stroke="#4060e4" stroke-width="0.9"/><text x="7.3" y="10.9" text-anchor="middle" font-family="Liberation Sans, sans-serif" font-weight="bold" font-size="10.5" fill="#1c2cb0" stroke="#1c2cb0" stroke-width="0.35">?</text></svg>
<div class="btn" style="left:978px;top:650px;width:75px;height:26px;border:2px solid #7a8a99"></div>
<div class="btn" style="left:1057px;top:650px;width:75px;height:26px"></div>
<div class="btn" style="left:1136px;top:650px;width:75px;height:26px"></div>
<div class="l" style="left:1006.90px;top:657px;letter-spacing:-1.400px;"><u>O</u>K</div>
<div class="l" style="left:1074.70px;top:657px;letter-spacing:-0.020px;"><u>C</u>ancel</div>
<div class="l" style="left:1157.80px;top:657px;letter-spacing:-0.550px;"><u>A</u>pply</div>
<svg style="left:19px;top:664px" width="16" height="16" viewBox="0 0 16 16"><rect x="0.9" y="0.9" width="14.4" height="14.4" rx="3.2" fill="none" stroke="#cdb674" stroke-width="0.8"/><circle cx="8.1" cy="8" r="4.75" fill="none" stroke="#e2474b" stroke-width="4"/><circle cx="8.1" cy="8" r="6.3" fill="none" stroke="#c63a40" stroke-width="0.9" stroke-opacity="0.7"/><circle cx="8.1" cy="8" r="3.2" fill="none" stroke="#c63a40" stroke-width="0.8" stroke-opacity="0.7"/><circle cx="8.1" cy="8" r="4.75" fill="none" stroke="#f2f5f5" stroke-width="4.2" stroke-dasharray="1.700 5.761" stroke-dashoffset="-2.881"/><circle cx="8.1" cy="8" r="2.7" fill="#f4f4f4" stroke="#bcc6c6" stroke-width="0.6"/></svg>
</body></html>
